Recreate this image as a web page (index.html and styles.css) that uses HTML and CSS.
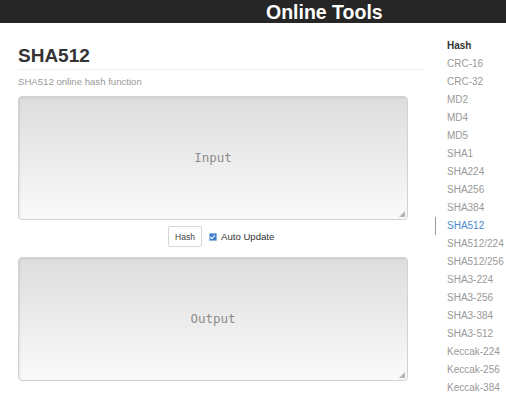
FILE: index.html
```html
<!DOCTYPE html>
<html>
<head>
<meta charset="utf-8">
<title>SHA512</title>
<link rel="stylesheet" href="styles.css">
</head>
<body>
<header class="topbar"><span class="brand">Online Tools</span></header>
<div class="layout">
  <main class="content">
    <h1 class="title">SHA512</h1>
    <p class="subtitle">SHA512 online hash function</p>
    <div class="area-wrap"><textarea class="area" placeholder="Input"></textarea></div>
    <div class="controls">
      <button class="btn">Hash</button>
      <label class="auto"><span class="check"></span>Auto Update</label>
    </div>
    <div class="area-wrap"><textarea class="area" placeholder="Output" readonly></textarea></div>
  </main>
  <nav class="sidebar">
    <div class="nav-head">Hash</div>
    <a class="nav-item">CRC-16</a>
    <a class="nav-item">CRC-32</a>
    <a class="nav-item">MD2</a>
    <a class="nav-item">MD4</a>
    <a class="nav-item">MD5</a>
    <a class="nav-item">SHA1</a>
    <a class="nav-item">SHA224</a>
    <a class="nav-item">SHA256</a>
    <a class="nav-item">SHA384</a>
    <a class="nav-item active">SHA512</a>
    <a class="nav-item">SHA512/224</a>
    <a class="nav-item">SHA512/256</a>
    <a class="nav-item">SHA3-224</a>
    <a class="nav-item">SHA3-256</a>
    <a class="nav-item">SHA3-384</a>
    <a class="nav-item">SHA3-512</a>
    <a class="nav-item">Keccak-224</a>
    <a class="nav-item">Keccak-256</a>
    <a class="nav-item">Keccak-384</a>
  </nav>
</div>
</body>
</html>
```
FILE: styles.css
```css
html, body {
  margin: 0;
  padding: 0;
  background: #fff;
  font-family: "Liberation Sans", Arial, sans-serif;
  color: #333;
  overflow: hidden;
}
.topbar {
  height: 23px;
  background: #262626;
  padding-left: 266px;
  box-sizing: border-box;
}
.brand {
  color: #fff;
  font-weight: bold;
  font-size: 19.5px;
  line-height: 24px;
  display: block;
}
.layout {
  display: flex;
  align-items: flex-start;
}
.content {
  width: 405px;
  margin-left: 18px;
  flex: none;
}
.title {
  margin: 22px 0 0;
  font-size: 19px;
  line-height: 22px;
  font-weight: bold;
  color: #333;
  padding-bottom: 2px;
  border-bottom: 1px solid #eee;
}
.subtitle {
  margin: 5px 0 0;
  font-size: 9.6px;
  line-height: 14px;
  color: #999;
}
.area-wrap {
  position: relative;
  width: 390px;
  margin-top: 7px;
}
.area {
  display: block;
  width: 390px;
  height: 124px;
  box-sizing: border-box;
  margin: 0;
  resize: none;
  border: 1px solid #d2d2d2;
  border-radius: 4px;
  background: linear-gradient(#dddddd, #fafafa);
  box-shadow: inset 1px 1px 2px rgba(0,0,0,0.08);
  padding: 53px 6px 0;
  text-align: center;
  font-family: "DejaVu Sans Mono", monospace;
  font-size: 12.5px;
  line-height: 16px;
  color: #555;
  outline: none;
}
.area::placeholder {
  color: #8c8c8c;
}
.area-wrap::after {
  content: "";
  position: absolute;
  right: 3px;
  bottom: 3px;
  width: 0;
  height: 0;
  border-left: 6px solid transparent;
  border-bottom: 6px solid #b5b5b5;
}
.controls {
  display: flex;
  align-items: center;
  padding-left: 150px;
  margin-top: 6px;
  height: 21px;
}
.controls + .area-wrap {
  margin-top: 10px;
}
.btn {
  height: 21px;
  width: 34px;
  padding: 0;
  border: 1px solid #d6d6d6;
  border-radius: 2px;
  background: #fff;
  font-family: "Liberation Sans", Arial, sans-serif;
  font-size: 8.5px;
  color: #444;
}
.auto {
  display: flex;
  align-items: center;
  margin-left: 7px;
  font-size: 9.6px;
  color: #333;
}
.check {
  width: 6px;
  height: 6px;
  border: 1px solid #8fb5e0;
  background: #3d7fcf;
  border-radius: 1px;
  margin-right: 4px;
  position: relative;
}
.check::after {
  content: "";
  position: absolute;
  left: 1px;
  top: 0px;
  width: 2px;
  height: 4px;
  border-right: 1px solid #fff;
  border-bottom: 1px solid #fff;
  transform: rotate(45deg);
}
.sidebar {
  margin-left: 12px;
  margin-top: 14px;
  display: flex;
  flex-direction: column;
}
.nav-head, .nav-item {
  font-size: 10px;
  line-height: 18px;
  padding-left: 12px;
  white-space: nowrap;
}
.nav-head {
  font-weight: bold;
  color: #333;
}
.nav-item {
  color: #999;
}
.nav-item.active {
  color: #4a8bd1;
  border-left: 1px solid #999;
  padding-left: 11px;
}
```
